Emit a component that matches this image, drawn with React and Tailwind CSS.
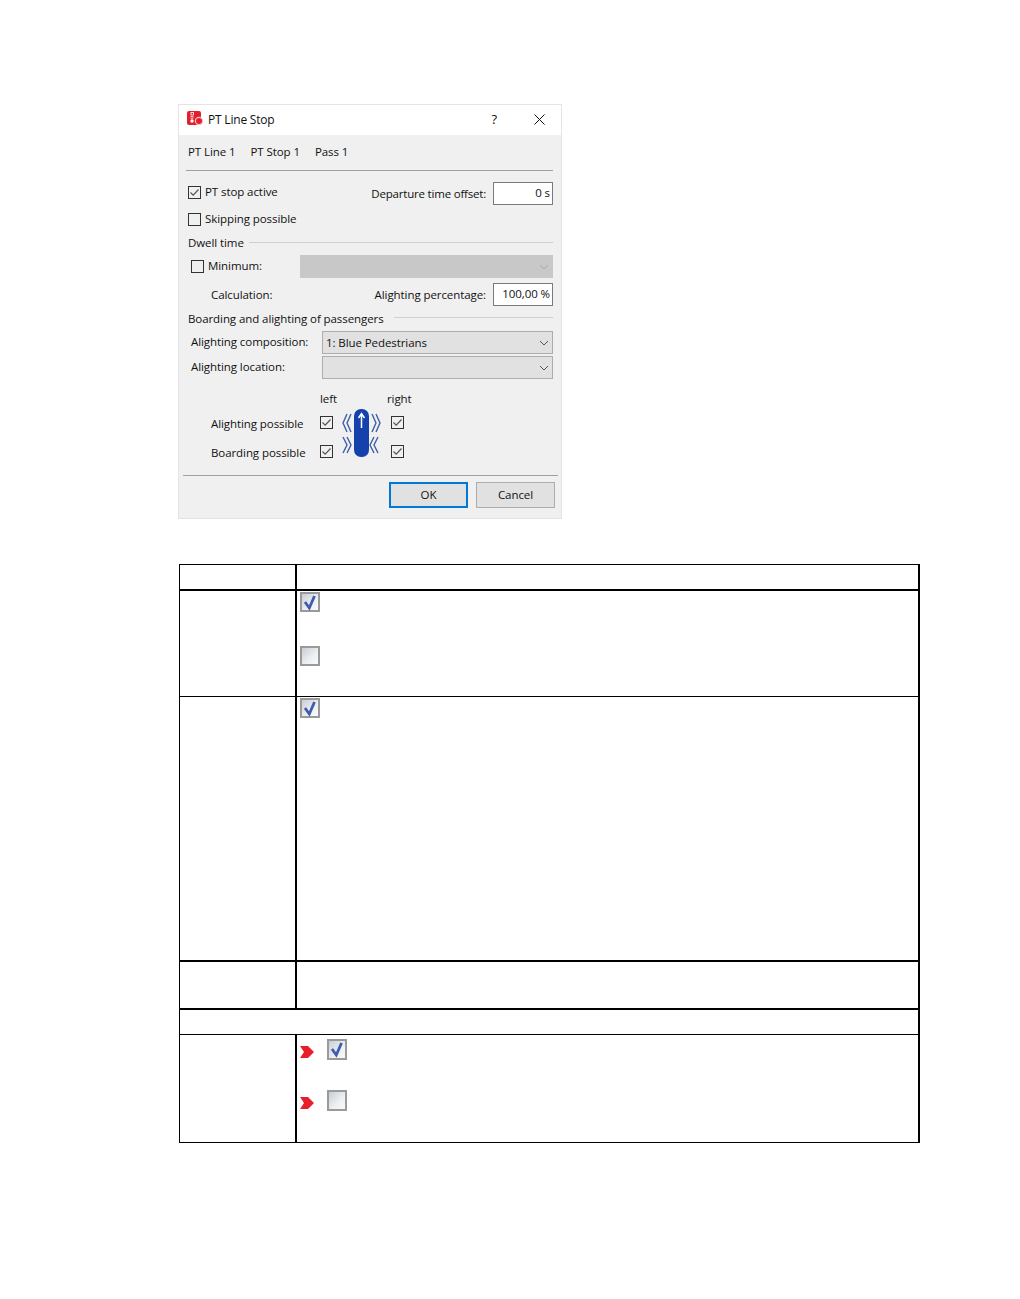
import React from 'react';

function Check({ checked = false }) {
  return (
    <span className="flex h-[13px] w-[13px] shrink-0 items-center justify-center border border-[#333333] bg-transparent">
      {checked && (
        <svg width="11" height="11" viewBox="0 0 11 11" fill="none">
          <path d="M1.5 5.5 L4.2 8.2 L9.5 2.5" stroke="#555555" strokeWidth="1.2" />
        </svg>
      )}
    </span>
  );
}

function Chevron({ dim }) {
  return (
    <svg width="10" height="6" viewBox="0 0 10 6" fill="none" className="mr-[3px]">
      <path d="M1 1 L5 5 L9 1" stroke={dim} strokeWidth="1" />
    </svg>
  );
}

function Combo({ value, disabled, className }) {
  return (
    <div
      className={`flex h-[23px] items-center justify-between border pl-[3px] ${
        disabled ? 'border-[#c8c8c8] bg-[#c8c8c8]' : 'border-[#adadad] bg-[#e1e1e1]'
      } ${className}`}
    >
      <span>{value}</span>
      <Chevron dim={disabled ? '#a8a8a8' : '#555555'} />
    </div>
  );
}

function NumberBox({ value }) {
  return (
    <div className="flex h-[23px] w-[60px] items-center justify-end border border-[#7a7a7a] bg-white pb-[2px] pr-[2px]">
      {value}
    </div>
  );
}

function GroupLine({ label, gap, lineOffset }) {
  return (
    <div className="flex h-[15px] items-center pl-[9px]">
      <span className="pt-[1px]">{label}</span>
      <span className={`h-px flex-1 bg-[#d0d0d0] ${gap} ${lineOffset}`} />
      <span className="w-[8px]" />
    </div>
  );
}

function DoorsIcon() {
  return (
    <svg width="40" height="48" viewBox="0 0 40 48" fill="none" className="shrink-0">
      <rect x="12" y="0" width="15" height="48" rx="7" fill="#1541ad" />
      <path d="M19.5 19 V5 M16.5 9 L19.5 4.5 L22.5 9" stroke="#ffffff" strokeWidth="1.5" />
      <g stroke="#3d5fa8" strokeWidth="1.4">
        <path d="M5 5 L1 14 L5 23 M9 5 L5 14 L9 23" />
        <path d="M30 5 L34 14 L30 23 M34 5 L38 14 L34 23" />
        <path d="M1 28 L5 36 L1 44 M5 28 L9 36 L5 44" />
        <path d="M32 28 L28 36 L32 44 M36 28 L32 36 L36 44" />
      </g>
    </svg>
  );
}

function Dialog() {
  return (
    <div
      className="ml-[178px] h-[415px] w-[384px] border border-[#e4e4e4] bg-[#f0f0f0] text-[11.5px] leading-none tracking-[-0.08px] text-[#111111]"
      style={{ fontFamily: '"Open Sans", sans-serif' }}
    >
      {/* title bar */}
      <div className="flex h-[30px] items-center bg-white pl-[8px]">
        <svg width="17" height="16" viewBox="0 0 17 16" fill="none" className="mb-[2px]">
          <rect x="0" y="0" width="14" height="14" rx="2" fill="#e2202c" />
          <rect x="4" y="1.5" width="2.5" height="2.5" stroke="#ffffff" strokeWidth="0.8" />
          <rect x="4" y="5.5" width="2" height="2" stroke="#ffffff" strokeWidth="0.6" />
          <circle cx="5" cy="10" r="1.7" fill="#ffffff" />
          <circle cx="12" cy="10" r="3.6" fill="#e2202c" stroke="#f8c4c8" strokeWidth="1.2" />
        </svg>
        <span className="ml-[4px] flex-1 text-[12px] tracking-[-0.2px]">PT Line Stop</span>
        <span className="mb-[2px] mr-[37px] text-[13px]">?</span>
        <svg width="11" height="11" viewBox="0 0 11 11" className="mb-[2px] mr-[16px]" fill="none">
          <path d="M0.5 0.5 L10.5 10.5 M10.5 0.5 L0.5 10.5" stroke="#111111" strokeWidth="1" />
        </svg>
      </div>

      {/* tabs */}
      <div className="flex h-[35px] items-center gap-[15px] pb-[1px] pl-[9px]">
        <span>PT Line 1</span>
        <span>PT Stop 1</span>
        <span>Pass 1</span>
      </div>
      <div className="ml-[7px] h-px w-[367px] bg-[#a0a0a0]" />

      <div className="mt-[11px] flex h-[23px] pl-[9px] pr-[8px]">
        <div className="mt-[4px] flex h-[13px] flex-1 items-center gap-[4px]">
          <Check checked />
          <span className="pb-[1px]">PT stop active</span>
        </div>
        <div className="flex items-center gap-[7px]">
          <span className="tracking-[-0.2px]">Departure time offset:</span>
          <NumberBox value="0 s" />
        </div>
      </div>

      <div className="mt-[8px] flex h-[13px] items-center gap-[4px] pl-[9px]">
        <Check />
        <span className="pb-[1px]">Skipping possible</span>
      </div>

      <div className="mt-[9px]">
        <GroupLine label="Dwell time" gap="ml-[5px]" lineOffset="mt-0" />
      </div>

      <div className="mt-[5px] flex h-[23px] items-center pl-[12px] pr-[8px]">
        <Check />
        <span className="ml-[4px] flex-1 pb-[1px]">Minimum:</span>
        <Combo disabled className="w-[253px]" />
      </div>

      <div className="mt-[5px] flex h-[23px] items-center pl-[32px] pr-[8px]">
        <span className="flex-1">Calculation:</span>
        <span className="mr-[7px]">Alighting percentage:</span>
        <NumberBox value="100,00 %" />
      </div>

      <div className="mt-[5px]">
        <GroupLine label="Boarding and alighting of passengers" gap="ml-[10px]" lineOffset="mb-[2px]" />
      </div>

      <div className="mt-[5px] flex h-[23px] items-center pl-[12px] pr-[8px]">
        <span className="flex-1 pb-[2px]">Alighting composition:</span>
        <Combo value="1: Blue Pedestrians" className="w-[231px]" />
      </div>
      <div className="mt-[2px] flex h-[23px] items-center pl-[12px] pr-[8px]">
        <span className="flex-1 pb-[2px]">Alighting location:</span>
        <Combo className="w-[231px]" />
      </div>

      <div className="mt-[13px] flex h-[14px] items-center pl-[141px]">
        <span className="w-[67px]">left</span>
        <span>right</span>
      </div>

      <div className="mt-[3px] flex h-[48px] pl-[32px]">
        <div className="flex w-[109px] flex-col pt-[8px]">
          <span className="h-[29px] shrink-0 leading-[14px]">Alighting possible</span>
          <span className="shrink-0 leading-[14px]">Boarding possible</span>
        </div>
        <div className="flex w-[22px] flex-col gap-[16px] pt-[7px]">
          <Check checked />
          <Check checked />
        </div>
        <DoorsIcon />
        <div className="ml-[9px] flex flex-col gap-[16px] pt-[7px]">
          <Check checked />
          <Check checked />
        </div>
      </div>

      <div className="ml-[4px] mt-[18px] h-px w-[375px] bg-[#a0a0a0]" />

      <div className="mt-[6px] flex justify-end gap-[8px] pr-[6px]">
        <button className="h-[26px] w-[79px] border-2 border-[#0078d7] bg-[#e1e1e1]">OK</button>
        <button className="h-[26px] w-[79px] border border-[#adadad] bg-[#e1e1e1]">Cancel</button>
      </div>
    </div>
  );
}

function TableCheck({ checked, tall }) {
  return (
    <svg width="20" height={tall ? 21 : 20} viewBox={tall ? '0 0 20 21' : '0 0 20 20'} className="shrink-0">
      <defs>
        <linearGradient id="boxFill" x1="0" y1="0" x2="1" y2="1">
          <stop offset="0" stopColor="#c4cad4" />
          <stop offset="0.6" stopColor="#eef0f3" />
          <stop offset="1" stopColor="#fafafa" />
        </linearGradient>
      </defs>
      <rect x="1" y="1" width="18" height={tall ? 19 : 18} fill="url(#boxFill)" stroke="#9a9a9a" strokeWidth="2" />
      {checked && <path d="M5 10 L9.3 16 L14.5 4" fill="none" stroke="#3f5cae" strokeWidth="2.8" />}
    </svg>
  );
}

function RedArrow() {
  return (
    <svg width="14" height="12" viewBox="0 0 14 12" className="mt-[4px] shrink-0">
      <path d="M0 0 H8 L14 6 L8 12 H0 L4 6 Z" fill="#e61f2b" />
    </svg>
  );
}

function Row({ height, children }) {
  return (
    <div className={`flex ${height}`}>
      <div className="w-[115px] shrink-0" />
      <div className="w-[2px] shrink-0 bg-black" />
      {children}
    </div>
  );
}

function DocTable() {
  return (
    <div className="ml-[179px] mt-[45px] w-[741px] border-l border-r-2 border-black">
      <div className="h-px bg-black" />
      <Row height="h-[24px]" />
      <div className="h-[2px] bg-black" />
      <Row height="h-[105px]">
        <div className="flex flex-col gap-[34px] pl-[3px] pt-px">
          <TableCheck checked />
          <TableCheck />
        </div>
      </Row>
      <div className="h-px bg-black" />
      <Row height="h-[263px]">
        <div className="pl-[3px] pt-px">
          <TableCheck checked />
        </div>
      </Row>
      <div className="h-[2px] bg-black" />
      <Row height="h-[46px]" />
      <div className="h-[2px] bg-black" />
      <div className="h-[24px]" />
      <div className="h-px bg-black" />
      <Row height="h-[107px]">
        <div className="flex flex-col pl-[3px] pt-[4px]">
          <div className="flex items-center gap-[13px]">
            <RedArrow />
            <TableCheck checked tall />
          </div>
          <div className="mt-[30px] flex items-center gap-[13px]">
            <RedArrow />
            <TableCheck tall />
          </div>
        </div>
      </Row>
      <div className="h-px bg-black" />
    </div>
  );
}

export default function App() {
  return (
    <div className="min-h-[1299px] bg-white pt-[104px]">
      <Dialog />
      <DocTable />
    </div>
  );
}
